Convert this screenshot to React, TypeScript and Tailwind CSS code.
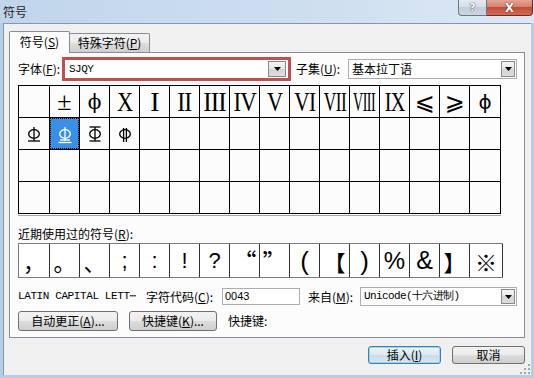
import React from "react";

const CJK = "font-['Noto_Sans_CJK_SC',sans-serif]";
const MONO = "font-['Liberation_Mono',monospace]";
const ROMAN = "inline-block font-['Liberation_Serif',serif] text-[28px] leading-none tracking-[-1px]";

function U({ children }: { children: React.ReactNode }) {
  return <span className="underline underline-offset-[1px]">{children}</span>;
}

function DropBtn({ className }: { className: string }) {
  return (
    <div
      className={
        "flex items-center justify-center border border-[#8a8a8a] bg-[linear-gradient(#f4f4f4,#e6e6e6_50%,#d4d4d4_50%,#dcdcdc)] " +
        className
      }
    >
      <svg width="7" height="4" viewBox="0 0 7 4">
        <path d="M0 0h7L3.5 4z" fill="#000" />
      </svg>
    </div>
  );
}

function Steel({ v, color }: { v: number; color: string }) {
  return (
    <svg width="16" height="20" viewBox="0 0 16 20" fill="none" stroke={color} strokeWidth="1.3">
      <ellipse cx="8" cy="10" rx="5.3" ry="4.3" />
      {v === 4 ? (
        <>
          <line x1="6.6" y1="4" x2="6.6" y2="18" />
          <line x1="9.4" y1="4" x2="9.4" y2="18" />
        </>
      ) : (
        <line x1="8" y1="3" x2="8" y2="17" />
      )}
      {v === 1 && <line x1="2" y1="17" x2="14" y2="17" />}
      {v === 2 && (
        <>
          <line x1="3" y1="16" x2="13" y2="16" />
          <line x1="1.5" y1="18.5" x2="14.5" y2="18.5" />
        </>
      )}
      {v === 3 && (
        <>
          <line x1="2.5" y1="3" x2="13.5" y2="3" />
          <line x1="2.5" y1="17" x2="13.5" y2="17" />
        </>
      )}
    </svg>
  );
}

const row1: { t: string; c: string }[] = [
  { t: "", c: "" },
  { t: "±", c: "font-['Liberation_Serif',serif] text-[26px] leading-none" },
  { t: "ϕ", c: "font-['DejaVu_Serif',serif] text-[20px] leading-none" },
  { t: "X", c: ROMAN + " scale-x-[0.8]" },
  { t: "I", c: ROMAN },
  { t: "II", c: ROMAN + " scale-x-[0.85]" },
  { t: "III", c: ROMAN + " scale-x-[0.9]" },
  { t: "IV", c: ROMAN + " scale-x-[0.82]" },
  { t: "V", c: ROMAN + " scale-x-[0.8]" },
  { t: "VI", c: ROMAN + " scale-x-[0.76]" },
  { t: "VII", c: ROMAN + " scale-x-[0.62]" },
  { t: "VIII", c: ROMAN + " scale-x-[0.5]" },
  { t: "IX", c: ROMAN + " scale-x-[0.72]" },
  { t: "⩽", c: "font-['DejaVu_Sans',sans-serif] text-[24px] leading-none" },
  { t: "⩾", c: "font-['DejaVu_Sans',sans-serif] text-[24px] leading-none" },
  { t: "ɸ", c: "font-['DejaVu_Sans',sans-serif] text-[20px] leading-none" },
];

const recent: { t: string; c: string }[] = [
  { t: "，", c: CJK + " text-[22px]" },
  { t: "。", c: CJK + " text-[22px]" },
  { t: "、", c: CJK + " text-[22px]" },
  { t: ";", c: "font-['Liberation_Sans',sans-serif] text-[22px]" },
  { t: ":", c: "font-['Liberation_Sans',sans-serif] text-[22px]" },
  { t: "!", c: "font-['Liberation_Sans',sans-serif] text-[22px]" },
  { t: "?", c: "font-['Liberation_Sans',sans-serif] text-[22px]" },
  { t: "“", c: CJK + " text-[24px]" },
  { t: "”", c: CJK + " text-[24px]" },
  { t: "(", c: "font-['Liberation_Sans',sans-serif] text-[26px]" },
  { t: "【", c: CJK + " text-[22px]" },
  { t: ")", c: "font-['Liberation_Sans',sans-serif] text-[26px]" },
  { t: "%", c: "font-['Liberation_Sans',sans-serif] text-[24px]" },
  { t: "&", c: "font-['Liberation_Sans',sans-serif] text-[25px]" },
  { t: "】", c: CJK + " text-[22px]" },
  { t: "※", c: CJK + " text-[22px]" },
];

const BTN =
  "flex items-center justify-center rounded-[3px] border border-[#707070] bg-[linear-gradient(#f2f2f2,#ebebeb_50%,#dddddd_50%,#cfcfcf)] text-[12px] text-black";

export default function App() {
  return (
    <div className={"relative w-[534px] h-[378px] overflow-hidden bg-[#b6cde6] flex flex-col text-black " + CJK}>
      {/* title bar */}
      <div className="h-[23px] flex items-start bg-[linear-gradient(90deg,#c0d5ec,#cfdff0_60%,#dce8f5)]">
        <span className="ml-[3px] mt-[4px] text-[12px] leading-[15px] text-[#1e1e1e]">符号</span>
        <div className="ml-auto mr-[1px] flex">
          <div className="w-[29px] h-[16px] rounded-bl-[4px] border border-t-0 border-[#6b7788] bg-[linear-gradient(#e3eaf2,#d4dce6_50%,#c3cdda_50%,#ccd6e2)] flex items-center justify-center">
            <span className="font-['DejaVu_Sans',sans-serif] font-bold text-[11px] leading-none text-white [text-shadow:0_0_1px_#333,0_0_1px_#333]">?</span>
          </div>
          <div className="w-[46px] h-[16px] rounded-br-[4px] border border-t-0 border-l-0 border-[#6d2a22] bg-[linear-gradient(#e4a494,#d57d6b_50%,#c24c37_50%,#cf6d56)] flex items-center justify-center">
            <span className="font-['DejaVu_Sans',sans-serif] font-bold text-[12px] leading-none text-white [text-shadow:0_0_1px_#3a1010,0_0_1px_#3a1010]">X</span>
          </div>
        </div>
      </div>

      {/* client */}
      <div className="relative flex-1 mx-[3px] mb-[3px] bg-[#f0f0f0] border-t border-l border-[#8797aa] flex flex-col">
        {/* tabs */}
        <div className="relative z-10 ml-[5px] mt-[7px] -mb-[1px] h-[22px] flex items-end">
          <div className="w-[61px] h-[22px] bg-[#fcfcfc] border border-b-0 border-[#898c95] rounded-t-[2px] flex items-center justify-center text-[12px] leading-none pb-[1px]">
            符号(<U>S</U>)
          </div>
          <div className="w-[80px] h-[19px] mb-[1px] bg-[linear-gradient(#f2f2f2,#ebebeb_50%,#dddddd_50%,#cfcfcf)] border border-l-0 border-b-0 border-[#898c95] rounded-tr-[2px] flex items-center justify-center text-[12px] leading-none">
            特殊字符(<U>P</U>)
          </div>
        </div>

        {/* panel */}
        <div className="ml-[5px] w-[516px] h-[286px] border border-[#898c95] bg-[#fcfcfc] flex flex-col">
          {/* font row */}
          <div className="mt-[4px] ml-[8px] h-[24px] flex items-center text-[12px]">
            <span className="w-[44px]">字体(<U>F</U>):</span>
            <div className="w-[229px] h-[24px] border-[3px] border-[#c0504d] bg-white flex items-center pl-[4px] pr-[2px]">
              <span className={MONO + " text-[11px] tracking-[-0.5px]"}>SJQY</span>
              <DropBtn className="ml-auto w-[18px] h-[16px]" />
            </div>
            <span className="ml-[5px] w-[52px]">子集(<U>U</U>):</span>
            <div className="w-[169px] h-[20px] border border-[#abadb3] bg-white flex items-center pl-[3px] pr-[1px]">
              <span>基本拉丁语</span>
              <DropBtn className="ml-auto w-[14px] h-[16px]" />
            </div>
          </div>

          {/* symbol grid */}
          <div className="mt-[4px] ml-[8px] w-[483px] pb-[1px] border-b border-[#a8a8a8]">
            <div className="grid grid-cols-[31px_repeat(14,30px)_31px] grid-rows-[repeat(4,32px)] border-t border-l border-black">
              {row1.map((g, i) => (
                <div key={"a" + i} className="border-r border-b border-black flex items-center justify-center overflow-hidden">
                  <span className={g.c}>{g.t}</span>
                </div>
              ))}
              <div className="border-r border-b border-black flex items-center justify-center">
                <Steel v={1} color="#000" />
              </div>
              <div className="border-r border-b border-black p-0">
                <div className="w-full h-full bg-[#3a8fe6] border border-dotted border-black flex items-center justify-center">
                  <Steel v={2} color="#ffffff" />
                </div>
              </div>
              <div className="border-r border-b border-black flex items-center justify-center">
                <Steel v={3} color="#000" />
              </div>
              <div className="border-r border-b border-black flex items-center justify-center">
                <Steel v={4} color="#000" />
              </div>
              {Array.from({ length: 12 + 32 }).map((_, i) => (
                <div key={"e" + i} className="border-r border-b border-black" />
              ))}
            </div>
          </div>

          {/* recent label */}
          <div className="mt-[10px] ml-[8px] h-[16px] text-[12px] leading-[16px]">近期使用过的符号(<U>R</U>):</div>

          {/* recent row */}
          <div className="mt-[1px] ml-[8px] w-[485px] grid grid-cols-[31px_repeat(14,30px)_33px] h-[35px] border-t border-b border-l border-[#7a7a7a] bg-white">
            {recent.map((g, i) => (
              <div key={"r" + i} className="border-r border-[#333] flex items-center justify-center overflow-hidden">
                <span className={g.c + " leading-none"}>{g.t}</span>
              </div>
            ))}
          </div>

          {/* info row */}
          <div className="mt-[9px] ml-[8px] h-[19px] flex items-center text-[12px]">
            <span className={"w-[128px] " + MONO + " text-[11px] tracking-[-0.4px]"}>LATIN CAPITAL LETT⋯</span>
            <span className="w-[76px]">字符代码(<U>C</U>):</span>
            <div className="w-[78px] h-[17px] border border-[#abadb3] bg-white flex items-center pl-[2px] font-['Liberation_Sans',sans-serif] text-[11px]">
              0043
            </div>
            <span className="ml-[8px] w-[52px]">来自(<U>M</U>):</span>
            <div className="w-[157px] h-[19px] border border-[#abadb3] bg-white flex items-center pl-[3px] pr-[1px]">
              <span className={MONO + " text-[11px] tracking-[-0.6px]"}>Unicode(十六进制)</span>
              <DropBtn className="ml-auto w-[14px] h-[15px]" />
            </div>
          </div>

          {/* buttons row */}
          <div className="mt-[5px] ml-[8px] h-[20px] flex items-center">
            <div className={BTN + " w-[100px] h-[20px]"}>自动更正(<U>A</U>)...</div>
            <div className={BTN + " ml-[11px] w-[88px] h-[20px]"}>快捷键(<U>K</U>)...</div>
            <span className="ml-[11px] text-[12px]">快捷键:</span>
          </div>
        </div>

        {/* dialog buttons */}
        <div className="mt-[8px] mr-[6px] flex justify-end gap-[11px]">
          <div className={"w-[73px] h-[18px] flex items-center justify-center rounded-[3px] border border-[#3c7fb1] bg-[linear-gradient(#eaf3f9,#dce9f2_50%,#c9dce9_50%,#d7e6f0)] shadow-[inset_0_0_0_1px_#9fd4f0] text-[12px]"}>
            插入(<U>I</U>)
          </div>
          <div className={BTN + " w-[73px] h-[18px]"}>取消</div>
        </div>

        {/* resize grip */}
        <svg className="absolute right-[1px] bottom-[1px]" width="11" height="11" viewBox="0 0 11 11">
          {[
            [9, 1],
            [9, 5],
            [5, 5],
            [9, 9],
            [5, 9],
            [1, 9],
          ].map(([x, y], i) => (
            <rect key={i} x={x} y={y} width="2" height="2" fill="#a0a8b4" />
          ))}
        </svg>
      </div>
    </div>
  );
}
